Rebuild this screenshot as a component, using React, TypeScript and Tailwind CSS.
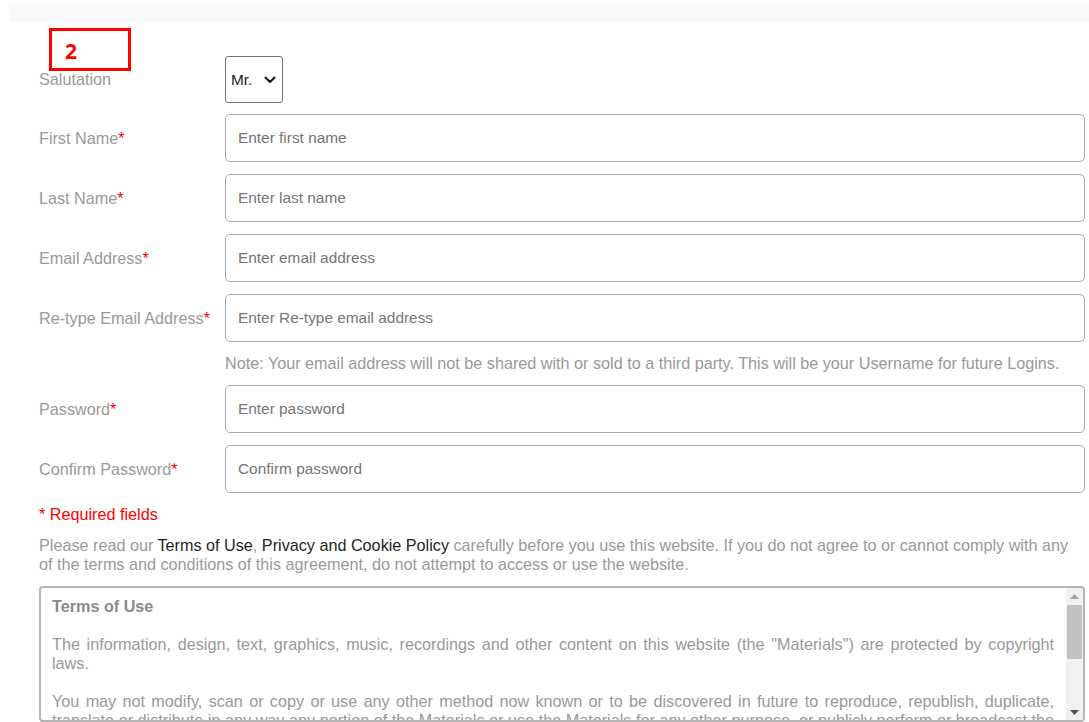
import React from "react";

const Field = ({ label, placeholder, required = true }: { label: string; placeholder: string; required?: boolean }) => (
  <div className="flex items-center">
    <div className="w-[186px] text-[16.2px] text-[#999999]">
      {label}
      {required && <span className="text-[#ff0000]">*</span>}
    </div>
    <div className="flex-1 h-[48px] rounded-[5px] border border-[#aaaaaa] flex items-center pl-[12px] text-[15.4px] text-[#757575]">
      {placeholder}
    </div>
  </div>
);

export default function App() {
  return (
    <div className="h-[722px] overflow-hidden bg-white font-['Liberation_Sans',Arial,sans-serif]">
      <div className="pt-[3px] pl-[9px]">
        <div className="h-[19px] bg-[#f8f9fa]" />
        <div className="relative pl-[30px] pr-[4px] pt-[34px]">
          <div className="absolute left-[40px] top-[6px] w-[82px] h-[43px] border-[3px] border-[#ff0000] pl-[13px] pt-[8px] text-[21px] leading-[24px] font-bold text-[#ff0000] font-['Open_Sans',sans-serif]">
            2
          </div>
          <div className="flex items-center">
            <div className="w-[186px] text-[16.2px] text-[#999999]">Salutation</div>
            <div className="w-[58px] h-[47px] rounded-[3px] border border-[#767676] flex items-center justify-between pl-[5px] pr-[6px] text-[15.4px] text-[#1a1a1a]">
              <span>Mr.</span>
              <svg width="12" height="8" viewBox="0 0 12 8" fill="none">
                <path d="M1.5 1.5L6 6L10.5 1.5" stroke="#111" strokeWidth="2" strokeLinecap="round" strokeLinejoin="round" />
              </svg>
            </div>
          </div>
          <div className="mt-[11px] flex flex-col gap-[12px]">
            <Field label="First Name" placeholder="Enter first name" />
            <Field label="Last Name" placeholder="Enter last name" />
            <Field label="Email Address" placeholder="Enter email address" />
            <Field label="Re-type Email Address" placeholder="Enter Re-type email address" />
          </div>
          <div className="h-[43px] flex items-center pl-[186px] text-[16.2px] text-[#999999]">
            Note: Your email address will not be shared with or sold to a third party. This will be your Username for future Logins.
          </div>
          <div className="flex flex-col gap-[12px]">
            <Field label="Password" placeholder="Enter password" />
            <Field label="Confirm Password" placeholder="Confirm password" />
          </div>
          <div className="mt-[12px] text-[16.2px] leading-[19px] text-[#ff0000]">* Required fields</div>
          <div className="mt-[12px] text-[16.2px] leading-[19px] text-[#999999]">
            Please read our <span className="text-[#1f1f1f]">Terms of Use</span>, <span className="text-[#1f1f1f]">Privacy and Cookie Policy</span> carefully before you use this website. If you do not agree to or cannot comply with any of the terms and conditions of this agreement, do not attempt to access or use the website.
          </div>
          <div className="mt-[12px] h-[136px] rounded-[4px] border-2 border-[#b5b5b5] flex overflow-hidden">
            <div className="flex-1 pl-[11px] pr-[12px] pt-[9px] text-[16.2px] leading-[19px] text-[#999999] text-justify">
              <div className="font-bold text-[#8a8a8a]">Terms of Use</div>
              <div className="h-[19px]" />
              <p>
                The information, design, text, graphics, music, recordings and other content on this website (the "Materials") are protected by copyright laws.
              </p>
              <div className="h-[19px]" />
              <p>
                You may not modify, scan or copy or use any other method now known or to be discovered in future to reproduce, republish, duplicate, translate or distribute in any way any portion of the Materials or use the Materials for any other purpose, or publicly perform or broadcast the Materials without prior written permission.
              </p>
            </div>
            <div className="w-[17px] bg-[#f1f1f1] flex flex-col items-center">
              <div className="h-[17px] flex items-center justify-center">
                <svg width="9" height="5" viewBox="0 0 9 5"><path d="M0 5L4.5 0L9 5Z" fill="#a3a3a3" /></svg>
              </div>
              <div className="w-[15px] h-[54px] bg-[#c1c1c1]" />
              <div className="flex-1" />
              <div className="h-[15px] flex items-center justify-center">
                <svg width="9" height="5" viewBox="0 0 9 5"><path d="M0 0L4.5 5L9 0Z" fill="#505050" /></svg>
              </div>
            </div>
          </div>
        </div>
      </div>
    </div>
  );
}
